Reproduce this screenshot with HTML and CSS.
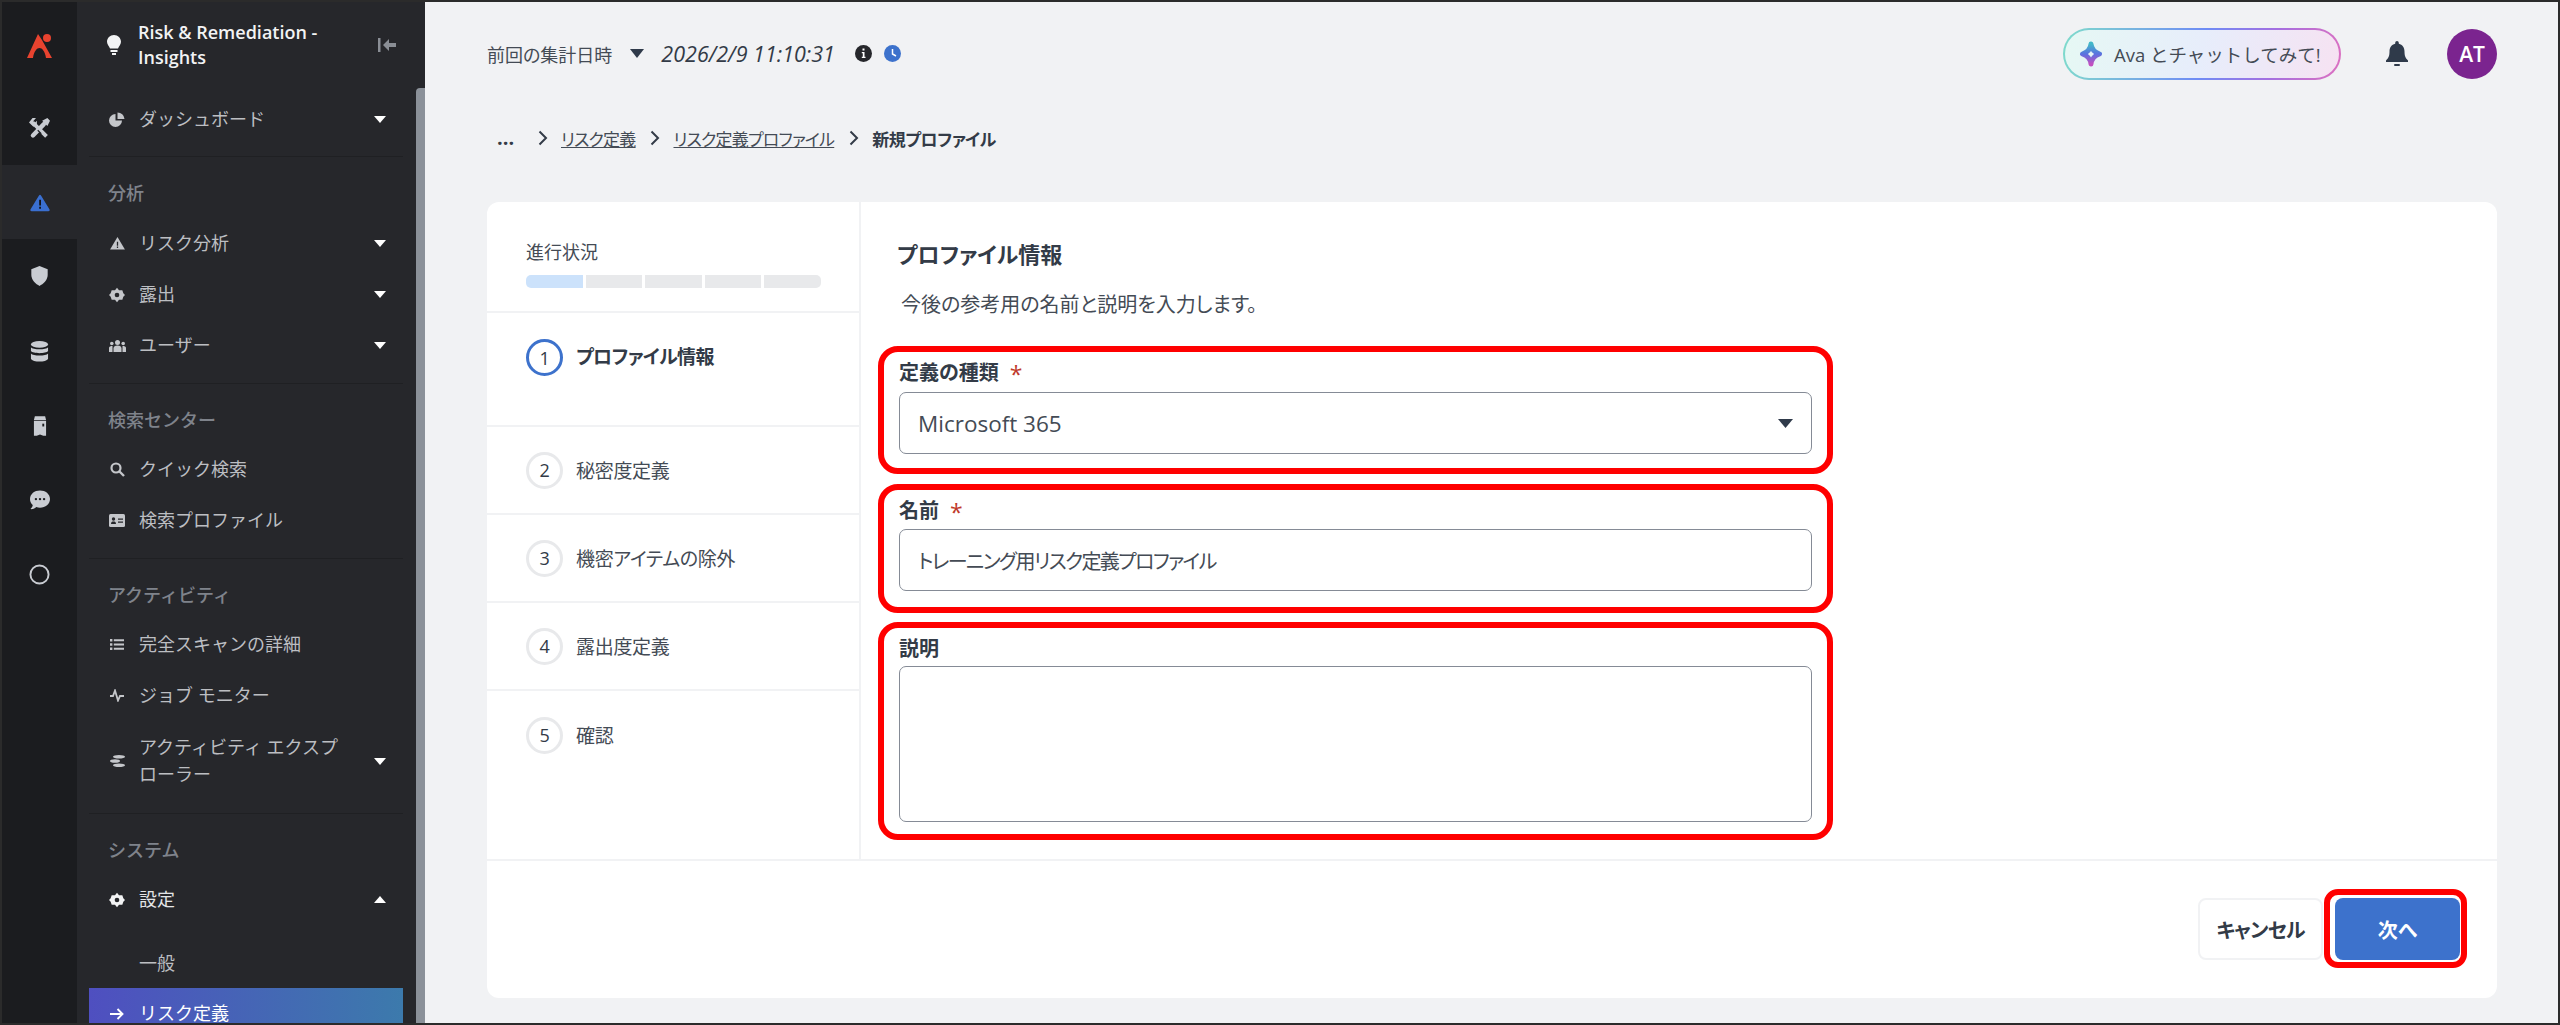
FILE: index.html
```html
<!DOCTYPE html>
<html lang="ja">
<head>
<meta charset="utf-8">
<title>Risk &amp; Remediation - Insights</title>
<link rel="stylesheet" href="styles.css">
</head>
<body>
<div class="app">
  <nav class="rail">
    <div class="rail-item rail-logo"><svg width="26" height="26" viewBox="0 0 26 26"><path fill="#e8432f" d="M0 25 L11 1 L15 7 L25 25 H19 C18 18 15 15 12.5 15 C10 15 7 18 6 25Z"/><circle cx="20" cy="5" r="4" fill="#e8432f"/></svg></div>
    <div class="rail-item rail-tools"><svg width="21" height="21" viewBox="0 0 24 24"><path stroke="#c9ccd2" stroke-width="5" stroke-linecap="round" d="M4.500 20 L17 7"/><path stroke="#c9ccd2" stroke-width="4.500" d="M4 5 L20 21"/><path fill="#c9ccd2" d="M0 5 L4 0 H8 L4.500 4 L6 6 L9 3 L9 7 L5 10Z M15 3 L21 0 L24 3 L21 9Z"/><path stroke="#1b1c1f" stroke-width="1.300" d="M10 14 L14 18"/></svg></div>
    <div class="rail-item is-active"><svg class="rail-warn" width="20" height="18" viewBox="0 0 24 22"><path fill="#3a6fd0" d="M12 1 Q13 1 14 3 L23.500 18.500 Q24.500 21 22 21 H2 Q-.5 21 .5 18.500 L10 3 Q11 1 12 1Z"/><path fill="#15161a" d="M11 7h2.200v7H11zM11 15.500h2.200v2.500H11z"/></svg></div>
    <div class="rail-item"><svg width="19" height="20" viewBox="0 0 20 22"><path fill="#c9ccd2" d="M10 0 L19 3.500 V10 C19 15.500 14 20 10 22 C6 20 1 15.500 1 10 V3.500Z"/></svg></div>
    <div class="rail-item"><svg width="19" height="21" viewBox="0 0 20 22"><ellipse cx="10" cy="3.500" rx="9" ry="3.500" fill="#c9ccd2"/><path fill="#c9ccd2" d="M1 6.500 C3 9.500 17 9.500 19 6.500 V10.500 C17 13.500 3 13.500 1 10.500Z M1 13 C3 16 17 16 19 13 V18.500 C17 22.500 3 22.500 1 18.500Z"/></svg></div>
    <div class="rail-item"><svg width="14" height="20" viewBox="0 0 15 21"><path fill="#c9ccd2" d="M2 0H13L14 4H1Z M1 5H14V21H11L7.500 19.500L4 21H1Z"/><rect x="10" y="8" width="2" height="3" fill="#1b1c1f"/></svg></div>
    <div class="rail-item"><svg width="20" height="20" viewBox="0 0 22 21"><path fill="#c9ccd2" d="M11 0C17 0 22 3.800 22 9.500S17 19 11 19C9.500 19 8.200 18.800 7 18.300C5.500 19.700 3 21 0.500 20.500C2 19 3 17.500 3 16C1 14.300 0 12 0 9.500C0 3.800 5 0 11 0Z"/><circle cx="6.500" cy="9.500" r="1.300" fill="#1b1c1f"/><circle cx="11" cy="9.500" r="1.300" fill="#1b1c1f"/><circle cx="15.500" cy="9.500" r="1.300" fill="#1b1c1f"/></svg></div>
    <div class="rail-item"><svg width="21" height="21" viewBox="0 0 22 22"><circle cx="11" cy="11" r="9.500" fill="none" stroke="#c9ccd2" stroke-width="2"/></svg></div>
  </nav>

  <aside class="sidebar">
    <div class="side-head">
      <svg class="bulb" width="14" height="20" viewBox="0 0 14 20"><path fill="#f2f3f4" d="M7 0C11 0 14 3 14 6.800C14 9.500 12 11 11 13.500H3C2 11 0 9.500 0 6.800C0 3 3 0 7 0Z"/><rect x="3.500" y="15" width="7" height="2" fill="#f2f3f4"/><rect x="5" y="18" width="4" height="2" fill="#f2f3f4"/></svg>
      <div class="side-title">Risk &amp; Remediation - Insights</div>
      <svg class="collapse" width="18" height="14" viewBox="0 0 18 14"><rect width="2.500" height="14" fill="#8a8e95"/><path fill="#8a8e95" d="M5 7L11 1V5H18V9H11V13Z"/></svg>
    </div>

    <div class="nav-group nav-group-first">
      <div class="nav-item"><span class="nav-icon"><svg width="16" height="16" viewBox="0 0 16 16"><path fill="#c4c6ca" d="M6.500 2a6.500 6.500 0 1 0 6.500 6.500H6.500Z"/><path fill="#c4c6ca" d="M8.500 0.500A7 7 0 0 1 15.500 7H8.500Z"/></svg></span><span class="nav-text">ダッシュボード</span><span class="caret"></span></div>
    </div>

    <div class="nav-group">
      <div class="nav-label nav-label-tall">分析</div>
      <div class="nav-item"><span class="nav-icon"><svg width="15" height="13" viewBox="0 0 16 14"><path fill="#c4c6ca" d="M8 0L16 13.500H0Z"/><path fill="#26272b" d="M7.300 5h1.400v4.500H7.300zM7.300 10.300h1.400v1.500H7.300z"/></svg></span><span class="nav-text">リスク分析</span><span class="caret"></span></div>
      <div class="nav-item"><span class="nav-icon"><svg width="16" height="16" viewBox="0 0 24 24"><path fill="#c4c6ca" d="M12 1L15 5H20L21.500 9.500L24 12L21.500 14.500L20 19H15L12 23L9 19H4L2.500 14.500L0 12L2.500 9.500L4 5H9Z"/><circle cx="12" cy="12" r="3.500" fill="#26272b"/></svg></span><span class="nav-text">露出</span><span class="caret"></span></div>
      <div class="nav-item"><span class="nav-icon"><svg width="17" height="12" viewBox="0 0 17 12"><g fill="#c4c6ca"><circle cx="8.500" cy="2.500" r="2.500"/><circle cx="2.800" cy="3.500" r="1.800"/><circle cx="14.200" cy="3.500" r="1.800"/><path d="M4.500 12V8.500C4.500 6.500 6 5.500 8.500 5.500S12.500 6.500 12.500 8.500V12Z"/><path d="M0 12V8C0 6.500 1.500 6 3.500 6V12ZM17 12V8C17 6.500 15.500 6 13.500 6V12Z"/></g></svg></span><span class="nav-text">ユーザー</span><span class="caret"></span></div>
    </div>

    <div class="nav-group">
      <div class="nav-label">検索センター</div>
      <div class="nav-item"><span class="nav-icon"><svg width="15" height="15" viewBox="0 0 15 15"><circle cx="6" cy="6" r="4.500" fill="none" stroke="#c4c6ca" stroke-width="2.200"/><path d="M9.500 9.500L14 14" stroke="#c4c6ca" stroke-width="2.400"/></svg></span><span class="nav-text">クイック検索</span></div>
      <div class="nav-item"><span class="nav-icon"><svg width="16" height="13" viewBox="0 0 16 13"><rect width="16" height="13" rx="1.500" fill="#c4c6ca"/><circle cx="4.500" cy="5" r="1.700" fill="#26272b"/><path fill="#26272b" d="M2 10C2 8 3 7.500 4.500 7.500S7 8 7 10ZM9 4.500H14V5.700H9ZM9 7.500H14V8.700H9Z"/></svg></span><span class="nav-text">検索プロファイル</span></div>
    </div>

    <div class="nav-group">
      <div class="nav-label">アクティビティ</div>
      <div class="nav-item"><span class="nav-icon"><svg width="14" height="11" viewBox="0 0 14 11"><path fill="#c4c6ca" d="M0 0h2.400v2.400H0zM3.800 0.200H14v2H3.800zM0 4.300h2.400v2.400H0zM3.800 4.500H14v2H3.800zM0 8.600h2.400V11H0zM3.800 8.800H14v2H3.800z"/></svg></span><span class="nav-text">完全スキャンの詳細</span></div>
      <div class="nav-item"><span class="nav-icon"><svg width="14" height="13" viewBox="0 0 14 13"><path fill="none" stroke="#c4c6ca" stroke-width="1.800" d="M0 7H3L5 1.500L8 11.500L10 7H14"/></svg></span><span class="nav-text">ジョブ モニター</span></div>
      <div class="nav-item nav-item-wrap"><span class="nav-icon"><svg width="15" height="12" viewBox="0 0 15 12"><g fill="#c4c6ca"><ellipse cx="9" cy="1.800" rx="6" ry="1.800"/><ellipse cx="5" cy="6" rx="5" ry="1.800"/><ellipse cx="9" cy="10.200" rx="6" ry="1.800"/></g></svg></span><span class="nav-text">アクティビティ エクスプローラー</span><span class="caret"></span></div>
    </div>

    <div class="nav-group nav-group-last">
      <div class="nav-label">システム</div>
      <div class="nav-item nav-item-open"><span class="nav-icon"><svg width="16" height="16" viewBox="0 0 24 24"><path fill="#f2f3f4" d="M12 1L15 5H20L21.500 9.500L24 12L21.500 14.500L20 19H15L12 23L9 19H4L2.500 14.500L0 12L2.500 9.500L4 5H9Z"/><circle cx="12" cy="12" r="3.500" fill="#26272b"/></svg></span><span class="nav-text">設定</span><span class="caret caret-up"></span></div>
      <div class="nav-item nav-sub"><span class="nav-icon"></span><span class="nav-text">一般</span></div>
      <div class="nav-item nav-current"><span class="nav-icon"><svg width="14" height="12" viewBox="0 0 14 12"><path fill="none" stroke="#fff" stroke-width="1.900" d="M0 6H12M7.500 1L12.500 6L7.500 11"/></svg></span><span class="nav-text">リスク定義</span></div>
    </div>
    <div class="scrollbar"></div>
  </aside>

  <main class="main">
    <header class="topbar">
      <span class="stamp-label">前回の集計日時</span>
      <svg class="stamp-caret" width="14" height="9" viewBox="0 0 14 9"><path fill="#2f3a4a" d="M0 0H14L7 9Z"/></svg>
      <span class="stamp-date">2026/2/9 11:10:31</span>
      <svg class="stamp-info" width="17" height="17" viewBox="0 0 17 17"><circle cx="8.500" cy="8.500" r="8.500" fill="#26272b"/><path fill="#fff" d="M7.500 3.500h2v2h-2zM6.800 7h2.700v4.800h1v1.200H6.800v-1.200h1V8.200h-1z"/></svg>
      <svg class="stamp-clock" width="17" height="17" viewBox="0 0 17 17"><circle cx="8.500" cy="8.500" r="8.500" fill="#3d72cc"/><path fill="none" stroke="#fff" stroke-width="1.500" d="M8.500 4V9L12 11"/></svg>
      <span class="topbar-space"></span>
      <div class="ava">
        <svg width="22" height="26" viewBox="0 0 22 26"><defs><linearGradient id="avaG" x1="0" y1="0" x2="0" y2="1"><stop offset="0" stop-color="#42b8c8"/><stop offset=".5" stop-color="#5a72e0"/><stop offset="1" stop-color="#c24fc0"/></linearGradient></defs><path fill="none" stroke="url(#avaG)" stroke-width="5" stroke-linejoin="round" d="M11 3C11.500 8 14 11 19.500 13C14 15 11.500 18 11 23C10.500 18 8 15 2.500 13C8 11 10.500 8 11 3Z"/></svg>
        <span>Ava とチャットしてみて!</span>
      </div>
      <svg class="bell" width="22" height="26" viewBox="0 0 22 26"><path fill="#2f3a4a" d="M11 0C12 0 12.800 .8 12.800 2V2.800C16.500 3.600 18.500 6.500 18.500 10.500C18.500 15 19.500 17 22 19.500V21H0V19.500C2.500 17 3.500 15 3.500 10.500C3.500 6.500 5.500 3.600 9.200 2.800V2C9.200 .8 10 0 11 0Z"/><rect x="8" y="23" width="6" height="2" rx="1" fill="#2f3a4a"/></svg>
      <div class="avatar">AT</div>
    </header>

    <div class="crumbs">
      <span class="crumb-more">...</span>
      <svg class="chev chev-first" width="10" height="16" viewBox="0 0 10 16"><path fill="none" stroke="#333b47" stroke-width="2" d="M1.500 1.500L8 8L1.500 14.500"/></svg>
      <a class="crumb-link">リスク定義</a>
      <svg class="chev" width="10" height="16" viewBox="0 0 10 16"><path fill="none" stroke="#333b47" stroke-width="2" d="M1.500 1.500L8 8L1.500 14.500"/></svg>
      <a class="crumb-link">リスク定義プロファイル</a>
      <svg class="chev" width="10" height="16" viewBox="0 0 10 16"><path fill="none" stroke="#333b47" stroke-width="2" d="M1.500 1.500L8 8L1.500 14.500"/></svg>
      <span class="crumb-current">新規プロファイル</span>
    </div>

    <section class="card">
      <div class="card-body">
        <div class="steps">
          <div class="progress">
            <div class="progress-label">進行状況</div>
            <div class="progress-bar"><span class="seg seg-on"></span><span class="seg"></span><span class="seg"></span><span class="seg"></span><span class="seg"></span></div>
          </div>
          <div class="step step-first step-active"><span class="step-num">1</span><span class="step-text">プロファイル情報</span></div>
          <div class="step"><span class="step-num">2</span><span class="step-text">秘密度定義</span></div>
          <div class="step"><span class="step-num">3</span><span class="step-text">機密アイテムの除外</span></div>
          <div class="step"><span class="step-num">4</span><span class="step-text">露出度定義</span></div>
          <div class="step step-last"><span class="step-num">5</span><span class="step-text">確認</span></div>
        </div>
        <div class="form">
          <h1 class="form-title">プロファイル情報</h1>
          <p class="form-sub">今後の参考用の名前と説明を入力します。</p>
          <div class="field field-type">
            <div class="field-label">定義の種類<span class="req">*</span></div>
            <div class="control control-select"><span class="select-value">Microsoft 365</span><svg width="15" height="9" viewBox="0 0 15 9"><path fill="#2f3a4a" d="M0 0H15L7.500 9Z"/></svg></div>
          </div>
          <div class="field field-name">
            <div class="field-label">名前<span class="req">*</span></div>
            <div class="control control-text">トレーニング用リスク定義プロファイル</div>
          </div>
          <div class="field field-desc">
            <div class="field-label">説明</div>
            <div class="control control-area"></div>
          </div>
        </div>
      </div>
      <footer class="card-foot">
        <button class="btn btn-cancel">キャンセル</button>
        <div class="next-mark"><button class="btn btn-next">次へ</button></div>
      </footer>
    </section>
  </main>
</div>
</body>
</html>
```
FILE: styles.css
```css
* { box-sizing: border-box; }
html, body { margin: 0; padding: 0; height: 100%; overflow: hidden; }
body {
  background: #f1f2f4;
  font-family: "Open Sans", "Noto Sans CJK JP", sans-serif;
  color: #333b47;
}
svg { display: block; flex: none; }

.app {
  width: 2560px;
  height: 1025px;
  border: 2px solid #2b2b2b;
  display: flex;
  overflow: hidden;
  background: #f1f2f4;
}

/* icon rail */
.rail { width: 75px; flex: none; background: #1b1c1f; }
.rail-item { height: 74.6px; display: flex; align-items: center; justify-content: center; }
.rail-logo { height: 88px; padding-bottom: 1px; }
.rail-tools { padding-top: 3px; }
.rail-item.is-active { background: #26272b; }
.rail-warn { margin-top: 2px; }

/* sidebar */
.sidebar {
  width: 348px;
  flex: none;
  background: #26272b;
  position: relative;
  overflow: hidden;
  color: #bcbec2;
  font-size: 18px;
  padding: 0 22px 0 12px;
}
.scrollbar {
  position: absolute;
  top: 86px;
  right: 0;
  width: 9px;
  bottom: 0;
  background: #8b9199;
  border-radius: 4px 0 0 0;
}
.side-head { height: 92px; display: flex; align-items: center; padding: 0 0 6px 18px; }
.bulb { margin-right: 17px; }
.side-title { width: 210px; color: #f2f3f4; font-weight: 600; font-size: 18px; line-height: 25px; }
.collapse { margin-left: 30px; }

.nav-group { border-bottom: 1px solid #1f2023; padding-bottom: 12px; }
.nav-group-first { padding-bottom: 11px; }
.nav-group-last { border-bottom: 0; }
.nav-label {
  height: 60px;
  padding: 23px 0 0 19px;
  line-height: 26px;
  color: #7f838b;
  font-weight: 500;
  font-size: 18px;
}
.nav-label-tall { height: 61px; }
.nav-item {
  display: flex;
  align-items: center;
  height: 51px;
  padding: 0 17px;
  line-height: 27px;
}
.nav-item-wrap { height: 80px; }
.nav-icon { width: 22px; display: flex; justify-content: center; margin-right: 11px; flex: none; }
.nav-text { flex: 1; }
.nav-item-wrap .nav-text { padding-right: 22px; }
.caret { width: 0; height: 0; border-left: 6px solid transparent; border-right: 6px solid transparent; border-top: 7px solid #fff; }
.caret-up { border-top: 0; border-bottom: 7px solid #fff; }
.nav-item-open { color: #e4e5e7; }
.nav-sub { margin-top: 13px; height: 50px; }
.nav-current { background: linear-gradient(90deg, #4f4fc0, #3c7aac); color: #fff; }

/* main */
.main { flex: 1; min-width: 0; padding: 0 60px 0 62px; }
.topbar { height: 103px; display: flex; align-items: center; font-size: 18px; }
.stamp-label { font-feature-settings: "palt"; color: #444b55; font-size: 18px; }
.stamp-caret { margin: 0 17px 0 18px; }
.stamp-date { font-style: italic; color: #333b47; font-size: 21.500px; }
.stamp-info { margin-left: 20px; }
.stamp-clock { margin-left: 12px; }
.topbar-space { flex: 1; }
.ava {
  width: 278px;
  height: 52px;
  display: flex;
  align-items: center;
  gap: 12px;
  padding-left: 15px;
  border: 2px solid transparent;
  border-radius: 26px;
  background:
    linear-gradient(100deg, #e6f8f4, #e7edfb 50%, #f6e2f2) padding-box,
    linear-gradient(100deg, #7fdccb, #6f8cf5 50%, #a56fe0 75%, #dd70c0) border-box;
  font-size: 18.500px;
  color: #444b55;
  white-space: nowrap;
}
.bell { margin-left: 45px; }
.avatar {
  width: 50px;
  height: 50px;
  margin: 0 1px 0 39px;
  border-radius: 50%;
  background: #7b248f;
  color: #fff;
  font-size: 21px;
  font-weight: 600;
  display: flex;
  align-items: center;
  justify-content: center;
}

.crumbs {
  height: 66px;
  margin-bottom: 31px;
  display: flex;
  align-items: center;
  padding-left: 10px;
  font-size: 17px;
  letter-spacing: -.8px;
  font-feature-settings: "palt";
}
.crumb-more { font-weight: 700; font-size: 20px; width: 41px; line-height: 20px; letter-spacing: 0; }
.chev { margin: 0 13px 0 15px; }
.chev-first { margin-left: 0; }
.crumb-link { color: #444b55; text-decoration: underline; }
.crumb-current { font-weight: 700; color: #333b47; letter-spacing: -.5px; }

/* card */
.card { width: 2010px; height: 796px; background: #fff; border-radius: 12px; display: flex; flex-direction: column; }
.card-body { height: 659px; display: flex; border-bottom: 2px solid #f1f2f4; }
.steps { width: 374px; flex: none; border-right: 2px solid #f1f2f4; }
.progress { height: 111px; padding: 38px 38px 0 39px; border-bottom: 2px solid #f1f2f4; }
.progress-label { font-size: 18px; line-height: 24px; color: #444b55; }
.progress-bar { display: flex; gap: 3px; margin-top: 11px; height: 13px; }
.seg { flex: 1; background: #e8e9eb; }
.seg:first-child { border-radius: 5px 0 0 5px; }
.seg:last-child { border-radius: 0 5px 5px 0; }
.seg-on { background: #cce2fb; }
.step {
  height: 88px;
  display: flex;
  align-items: center;
  gap: 13px;
  padding-left: 39px;
  border-bottom: 2px solid #f1f2f4;
  font-size: 19px;
  letter-spacing: -.3px;
  font-feature-settings: "palt";
  color: #444b55;
}
.step-first { height: 114px; align-items: flex-start; padding-top: 26px; }
.step-last { border-bottom: 0; }
.step-num {
  width: 37px;
  height: 37px;
  border-radius: 50%;
  border: 3px solid #e8e9eb;
  display: flex;
  align-items: center;
  justify-content: center;
  font-size: 18px;
  font-weight: 500;
  color: #333b47;
  flex: none;
}
.step-active .step-num { border-color: #3d72cc; }
.step-active .step-text { font-weight: 700; color: #333b47; line-height: 37px; letter-spacing: -.6px; }

.form { flex: 1; padding: 36px 0 0 17px; font-feature-settings: "palt"; }
.form-title { margin: 0 0 0 19px; font-size: 22px; font-weight: 700; line-height: 32px; color: #333b47; }
.form-sub { margin: 21px 0 27px 23px; font-size: 20px; line-height: 28px; color: #444b55; }
.field { width: 955px; border: 6px solid #f00; border-radius: 20px; padding: 0 15px; position: relative; }
.field-type { height: 128px; padding-top: 40px; }
.field-name { height: 129px; margin-top: 10px; padding-top: 39px; }
.field-desc { height: 218px; margin-top: 9px; padding-top: 38px; }
.field-label {
  position: absolute;
  left: 15px;
  top: 8px;
  font-size: 20px;
  font-weight: 700;
  line-height: 26px;
  color: #333b47;
}
.req { color: #c0392b; margin-left: 11px; font-weight: 500; font-size: 23px; line-height: 20px; position: relative; top: 3px; }
.control {
  height: 62px;
  border: 1px solid #858b96;
  border-radius: 7px;
  display: flex;
  align-items: center;
  padding-left: 18px;
  font-size: 20px;
  color: #444b55;
}
.control-text { letter-spacing: -1.600px; }
.select-value { font-size: 22.500px; }
.control-select { justify-content: space-between; padding-right: 18px; }
.control-area { height: 156px; }

.card-foot { flex: 1; display: flex; justify-content: flex-end; padding: 28px 30px 0 0; }
.btn {
  width: 125px;
  height: 62px;
  border-radius: 8px;
  font: inherit;
  font-size: 20px;
  font-weight: 700;
  font-feature-settings: "palt";
}
.btn-cancel { margin-top: 9px; background: #fff; border: 2px solid #f1f2f4; color: #333b47; letter-spacing: -.8px; }
.next-mark { margin-left: 1px; height: 79px; border: 6px solid #f00; border-radius: 14px; padding: 3px 1px 3px 5px; }
.btn-next { display: block; background: #3d72cc; border: 0; color: #fff; }
```
